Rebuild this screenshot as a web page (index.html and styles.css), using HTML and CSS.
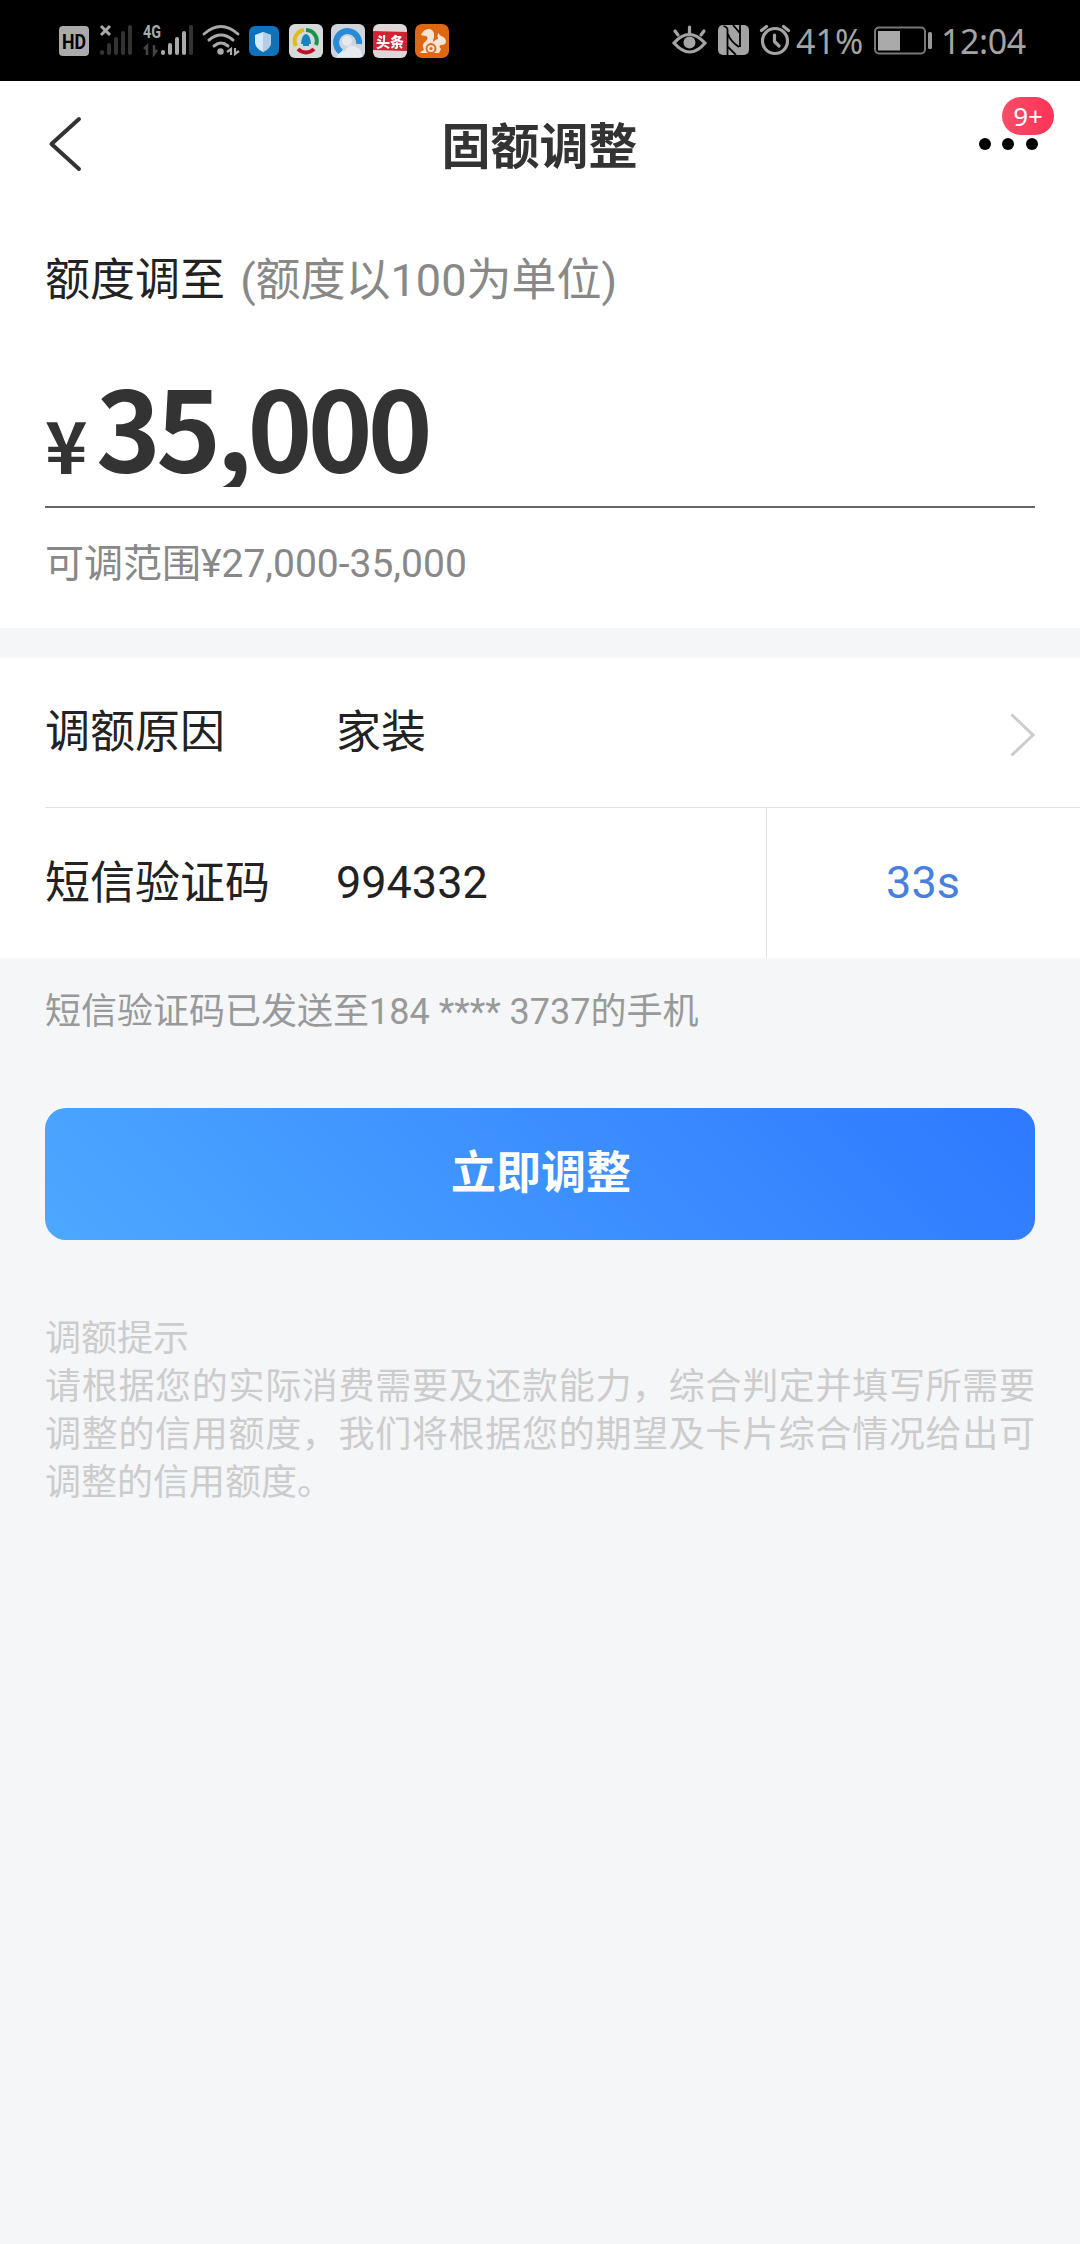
FILE: index.html
```html
<!DOCTYPE html>
<html lang="zh-CN">
<head>
<meta charset="utf-8">
<title>固额调整</title>
<link rel="stylesheet" href="styles.css">
</head>
<body>
<div class="status">
  <svg class="status-icons" width="460" height="81" viewBox="0 0 460 81">
    <rect x="59" y="26" width="30" height="30" rx="4" fill="#aaa"/>
    <text class="hd" x="74" y="49" text-anchor="middle" textLength="24" lengthAdjust="spacingAndGlyphs">HD</text>
    <path d="M101 26l9 9m0-9l-9 9" stroke="#aaa" stroke-width="3"/>
    <g stroke="#333" stroke-width="4" stroke-linecap="round"><path d="M102 52v1M109 45v8M116 39v14M123 33v20M130 27v26"/></g>
    <text class="net" x="143" y="38" textLength="18" lengthAdjust="spacingAndGlyphs">4G</text>
    <path d="M144 49l3-3v9M154 45v9l3-4" stroke="#444" stroke-width="2.5" fill="none"/>
    <g stroke="#aaa" stroke-width="4" stroke-linecap="round"><path d="M163 52v1M170 45v8M177 39v14M184 33v20"/><path d="M191 27v26" stroke="#333"/></g>
    <g fill="none" stroke="#aaa" stroke-width="3" stroke-linecap="round"><path d="M204 34q17-15 34 0M209 40q12-10 24 0M214 46q7-6 14 0"/></g>
    <circle cx="220.500" cy="51.500" r="3.200" fill="#aaa"/>
    <path d="M227 52l4-3v6M235 48v6l4-3" stroke="#aaa" stroke-width="2.200" fill="none"/>
    <g class="apps">
    <rect x="249" y="26" width="30" height="30" rx="6" fill="#0d64a3"/>
    <path d="M263 32l8 3v8q-1 6-8 9-7-3-8-9v-8z" fill="#bcd"/><path d="M263 32l8 3v8q-1 6-8 9z" fill="#9fb4c6"/>
    <rect x="289" y="24" width="34" height="34" rx="6" fill="#bcbfbe"/>
    <g fill="none" stroke-width="4"><path d="M296 46a11 11 0 0 1 8-16" stroke="#c2a51a"/><path d="M306 30a11 11 0 0 1 10 15" stroke="#178243"/><path d="M314 49a11 11 0 0 1-16 0" stroke="#a80f20"/></g>
    <path d="M301 44q1-10 5-10t5 10zM303 44h6v2h-6z" fill="#1473a8"/>
    <rect x="331" y="24" width="34" height="34" rx="6" fill="#b5bac0"/>
    <path d="M341 52a11.500 11.500 0 1 1 18-8" fill="none" stroke="#2479bd" stroke-width="6"/>
    <circle cx="347" cy="41" r="5" fill="#c9cdd2"/>
    <path d="M337 57q1-5 8-6 4-7 9-5 6 1 8 8v3z" fill="#c9cdd2"/>
    <rect x="373" y="24" width="34" height="34" rx="6" fill="#c2bdbd"/>
    <path d="M373 31l34 1v19l-34-1z" fill="#b5202d"/>
    <text class="news" x="390" y="47" text-anchor="middle">头条</text>
    <rect x="415" y="24" width="34" height="34" rx="7" fill="#c35a10"/>
    <path d="M420 53q1-2 4-3-3-6 2-9 3-3 0-5-2 0-5-1 3-7 9-6 5 2 4 8-1 3-1 5 3-3 5-3-1-3 0-6l3 3q4 1 5 5 0 4-5 4-3 1 0 4l-2 4z" fill="#d8c9bb"/>
    <circle cx="431" cy="48.500" r="4.500" fill="#d8c9bb" stroke="#c35a10" stroke-width="1.800"/>
    <circle cx="431" cy="48.500" r="1.500" fill="#c35a10"/>
    </g>
  </svg>
  <div class="status-right">
    <svg width="120" height="40" viewBox="670 21 120 40">
      <g fill="none" stroke="#a4a4a4" stroke-width="3.200" stroke-linecap="round"><path d="M674 43q15-17 31 0-15 18-31 0zM689.500 33v-6M678 35l-3-4M701 35l3-4"/></g>
      <circle cx="689.500" cy="42.500" r="6" fill="#a4a4a4"/>
      <rect x="718" y="25" width="31" height="30" rx="5" fill="#a4a4a4"/>
      <path d="M723.500 26q4 1 4 4v25M728 34q2 7 11 13M733 25l7 8v-8M728 47l8 8M740 33v14" fill="none" stroke="#000" stroke-width="1.800"/>
      <g fill="none" stroke="#a4a4a4" stroke-width="3.200" stroke-linecap="round"><circle cx="775" cy="41" r="12.500"/><path d="M774.500 35v6.500l4.500 4.500M761.500 30.500l5-4M788.500 30.500l-5-4"/></g>
    </svg>
    <span class="pct">41%</span>
    <svg class="battery" width="60" height="30" viewBox="873 26 60 30">
      <rect x="875" y="27.500" width="50" height="26" rx="4" fill="none" stroke="#777" stroke-width="2"/>
      <rect x="878" y="31" width="22" height="19.500" fill="#aaa"/><rect x="928" y="32" width="4" height="17" rx="1.500" fill="#999"/>
    </svg>
    <span class="time">12:04</span>
  </div>
</div>
<header class="nav">
  <svg class="back" width="40" height="60" viewBox="45 114 40 60"><path d="M79 119L51.500 144 79 169" fill="none" stroke="#333" stroke-width="4" stroke-linecap="round" stroke-linejoin="round"/></svg>
  <h1>固额调整</h1>
  <div class="more"><i></i><i></i><i></i><span class="badge">9+</span></div>
</header>
<section class="amount">
  <p class="amount-label">额度调至 <span>(额度以100为单位)</span></p>
  <div class="amount-value"><span class="yen">¥</span><span class="digits">35,000</span></div>
  <p class="range">可调范围¥27,000-35,000</p>
</section>
<section class="form">
  <div class="row reason"><label>调额原因</label><span>家装</span>
    <svg width="30" height="50" viewBox="1008 710 30 50"><path d="M1012.500 714.500L1034 735l-21.500 20.500" fill="none" stroke="#ccc" stroke-width="3"/></svg>
  </div>
  <div class="row sms"><label>短信验证码</label><span>994332</span><div class="count">33s</div></div>
</section>
<p class="sent">短信验证码已发送至184 **** 3737的手机</p>
<button class="submit">立即调整</button>
<div class="tips">
  <p>调额提示</p>
  <p>请根据您的实际消费需要及还款能力，综合判定并填写所需要调整的信用额度，我们将根据您的期望及卡片综合情况给出可调整的信用额度。</p>
</div>
</body>
</html>
```
FILE: styles.css
```css
* { box-sizing: border-box; }
body { margin: 0; min-height: 2244px; background: #f4f6f8; color: #222; font-family: Roboto, "Noto Sans CJK SC", sans-serif; font-size: 45px; }
p, h1 { margin: 0; font-weight: 400; }
svg { display: block; flex: none; }
.status { height: 81px; background: #000; color: #a4a4a4; display: flex; justify-content: space-between; font: 34px/81px "Noto Sans", sans-serif; }
.status-right { display: flex; align-items: center; width: 410px; }
.pct { width: 83px; flex: none; padding-left: 6px; padding-top: 1px; }
.time { margin-left: 8px; padding-top: 1px; letter-spacing: -0.4px; }
.apps { filter: brightness(1.14); }
.hd { font: 700 20px Roboto, sans-serif; fill: #000; }
.net { font: 700 18px Roboto, sans-serif; fill: #aaa; }
.news { font: 900 14px "Noto Sans CJK SC", sans-serif; fill: #ddd; }
.nav { height: 126px; padding: 0 42px 0 45px; background: #fff; display: grid; grid-template-columns: 80px 1fr 80px; align-items: center; }
.nav h1 { font: 700 49px/64px "Noto Sans CJK SC", sans-serif; color: #333; text-align: center; padding: 0 4px 3px 0; }
.more { position: relative; display: flex; gap: 11.3px; width: 60px; margin-left: 21px; }
.more i { width: 12px; height: 12px; border-radius: 50%; background: #000; flex: none; }
.badge { position: absolute; left: 23px; top: -41px; width: 52px; height: 38px; border-radius: 19px; background: linear-gradient(90deg, #fa4c68, #ff3357); color: #fff; font: 26px/39px "Noto Sans", sans-serif; text-align: center; }
.amount { height: 421px; background: #fff; padding: 44px 45px 0; }
.amount-label { line-height: 60px; height: 60px; white-space: pre; }
.amount-label span { color: #888; margin-left: 4px; }
.amount-value { height: 197px; border-bottom: 2px solid #666; display: flex; align-items: flex-end; color: #333; font-family: "Noto Sans CJK SC", sans-serif; font-weight: 700; line-height: 120px; }
.yen { font-size: 72px; width: 51px; height: 123px; }
.digits { font-size: 110px; letter-spacing: -4.7px; height: 123px; margin-bottom: 19px; overflow: hidden; }
.range { font-size: 39px; line-height: 56px; margin-top: 28px; color: #888; }
.form { margin-top: 30px; background: #fff; }
.row { display: flex; align-items: center; margin-left: 45px; }
.row label { width: 291px; padding-bottom: 8px; }
.row > span { flex: 1; }
.reason { height: 150px; border-bottom: 1px solid #e2e2e2; padding-right: 43px; }
.reason > span { padding-bottom: 8px; }
.reason svg { margin-top: 4px; }
.sms { height: 150px; color: #222; }
.sms > span { padding-bottom: 2px; }
.count { align-self: stretch; width: 314px; border-left: 1px solid #e2e2e2; display: flex; align-items: center; justify-content: center; padding: 0 1px 2px 0; color: #4880e0; }
.sent { font-size: 36px; line-height: 50px; margin: 29px 45px 71px; color: #999; }
.submit { display: block; width: 990px; height: 132px; margin: 0 45px; border: 0; border-radius: 21px; color: #fff; background: linear-gradient(45deg, #4da8ff, #2e79ff); font: 700 45px "Noto Sans CJK SC", sans-serif; padding: 0 0 10px 2px; }
.tips { margin: 75px 45px 0; font-size: 36px; line-height: 48px; color: #ccc; text-align: justify; }
```
